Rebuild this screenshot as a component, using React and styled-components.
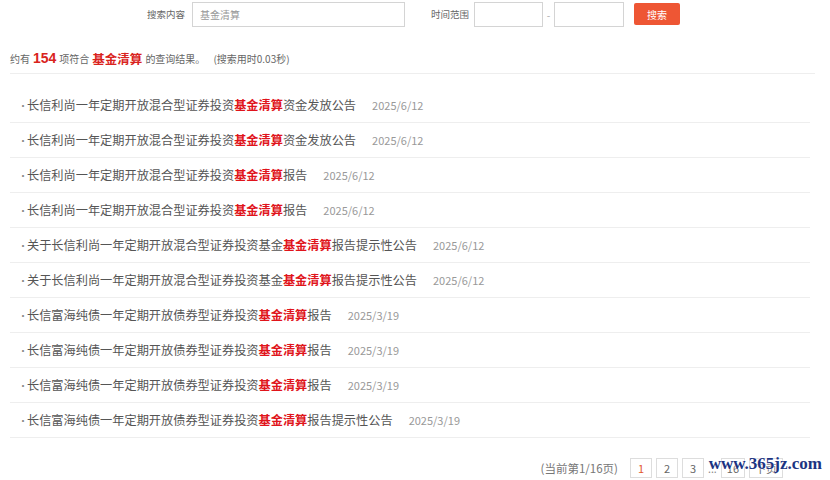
import React from 'react';
import styled, { createGlobalStyle } from "styled-components";

const GlobalStyle = createGlobalStyle`
	body {
		margin: 0;
		background: #fff;
		font-family: "Noto Sans CJK SC", "Liberation Sans", sans-serif;
		color: #555;
	}
`

const Page = styled.div`
	position: relative;
	width: 830px;
	height: 480px;
	overflow: hidden;
`

const SearchBar = styled.div`
	display: flex;
	align-items: center;
	height: 28px;
	padding: 0 0 0 147px;
`

const Label = styled.span`
	font-size: 9.5px;
	color: #666;
	margin-right: ${p => p.$gap || 6}px;
	white-space: nowrap;
`

const Input = styled.div`
	box-sizing: border-box;
	width: ${p => p.$w}px;
	height: 25px;
	border: 1px solid #d4d4d4;
	display: flex;
	align-items: center;
	padding-left: 7px;
	font-size: 10px;
	color: #999;
	margin-right: ${p => p.$mr || 0}px;
`

const Dash = styled.span`
	width: 11px;
	text-align: center;
	font-size: 10px;
	color: #aaa;
`

const SearchButton = styled.button`
	margin-left: 10px;
	width: 46px;
	height: 22px;
	border: none;
	border-radius: 2px;
	background: #ee5634;
	color: #fff;
	font-family: inherit;
	font-size: 10px;
	padding: 0;
`

const Summary = styled.div`
	margin: 15px 15px 0 10px;
	height: 30px;
	display: flex;
	align-items: center;
	font-size: 10px;
	color: #666;
	border-bottom: 1px solid #eee;
`

const Count = styled.b`
	color: #d9231d;
	font-size: 14px;
	margin: 0 3px;
	font-family: "Liberation Sans", sans-serif;
`

const Keyword = styled.b`
	color: #d9231d;
	font-size: 12.5px;
	margin: 0 3px;
`

const Note = styled.span`
	margin-left: 8px;
`

const List = styled.ul`
	list-style: none;
	margin: 14px 20px 0 10px;
	padding: 0;
`

const Row = styled.li`
	height: 34px;
	border-bottom: 1px solid #eee;
	display: flex;
	align-items: center;
	padding-left: 8px;
	font-size: 12.2px;
	color: #555;
`

const Bullet = styled.span`
	font-size: 10px;
	color: #888;
	width: 9px;
`

const Hit = styled.b`
	color: #e0141b;
`

const Date = styled.span`
	margin-left: 16px;
	font-size: 11px;
	color: #999;
`

const Pager = styled.div`
	display: flex;
	align-items: center;
	justify-content: flex-end;
	gap: 4px;
	margin: 20px 47px 0 0;
	font-size: 10.5px;
`

const PagerInfo = styled.span`
	color: #777;
	font-size: 11.5px;
	margin-right: 8px;
`

const PageBox = styled.span`
	box-sizing: border-box;
	min-width: 22px;
	height: 20px;
	padding: 0 5px;
	border: 1px solid #ddd;
	display: flex;
	align-items: center;
	justify-content: center;
	font-size: 11px;
	color: ${p => p.$active ? "#e2572f" : "#666"};
`

const Ellipsis = styled.span`
	color: #888;
`

const Watermark = styled.div`
	position: absolute;
	right: 8px;
	bottom: 6px;
	font-family: "Liberation Serif", serif;
	font-size: 17px;
	font-weight: bold;
	color: #1c3482;
	text-shadow: 0 0 2px #fff, 0 0 2px #fff;
`

const rows = [
	{ pre: "长信利尚一年定期开放混合型证券投资", post: "资金发放公告", date: "2025/6/12" },
	{ pre: "长信利尚一年定期开放混合型证券投资", post: "资金发放公告", date: "2025/6/12" },
	{ pre: "长信利尚一年定期开放混合型证券投资", post: "报告", date: "2025/6/12" },
	{ pre: "长信利尚一年定期开放混合型证券投资", post: "报告", date: "2025/6/12" },
	{ pre: "关于长信利尚一年定期开放混合型证券投资基金", post: "报告提示性公告", date: "2025/6/12" },
	{ pre: "关于长信利尚一年定期开放混合型证券投资基金", post: "报告提示性公告", date: "2025/6/12" },
	{ pre: "长信富海纯债一年定期开放债券型证券投资", post: "报告", date: "2025/3/19" },
	{ pre: "长信富海纯债一年定期开放债券型证券投资", post: "报告", date: "2025/3/19" },
	{ pre: "长信富海纯债一年定期开放债券型证券投资", post: "报告", date: "2025/3/19" },
	{ pre: "长信富海纯债一年定期开放债券型证券投资", post: "报告提示性公告", date: "2025/3/19" },
];

const App = () => {
	return (
		<Page>
			<GlobalStyle />
			<SearchBar>
				<Label $gap={7}>搜索内容</Label>
				<Input $w={213} $mr={26}>基金清算</Input>
				<Label $gap={5}>时间范围</Label>
				<Input $w={69} />
				<Dash>-</Dash>
				<Input $w={70} />
				<SearchButton>搜索</SearchButton>
			</SearchBar>
			<Summary>
				约有<Count>154</Count>项符合<Keyword>基金清算</Keyword>的查询结果。<Note>(搜索用时0.03秒)</Note>
			</Summary>
			<List>
				{rows.map((r, i) => (
					<Row key={i}>
						<Bullet>•</Bullet>
						{r.pre}<Hit>基金清算</Hit>{r.post}
						<Date>{r.date}</Date>
					</Row>
				))}
			</List>
			<Pager>
				<PagerInfo>(当前第1/16页)</PagerInfo>
				<PageBox $active>1</PageBox>
				<PageBox>2</PageBox>
				<PageBox>3</PageBox>
				<Ellipsis>...</Ellipsis>
				<PageBox>16</PageBox>
				<PageBox>下页</PageBox>
			</Pager>
			<Watermark>www.365jz.com</Watermark>
		</Page>
	);
};

export default App;
